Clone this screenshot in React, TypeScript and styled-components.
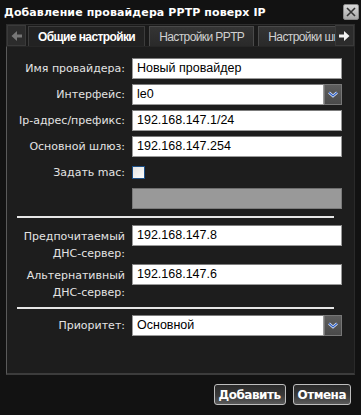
import React from "react";
import styled, {createGlobalStyle, css} from "styled-components";

const GlobalStyle = createGlobalStyle`
  html, body {
    margin: 0;
    padding: 0;
    background: #111;
  }
  * { box-sizing: border-box; }
`;

const Window = styled.div`
  width: 361px;
  height: 415px;
  background: #121212;
  font-family: "DejaVu Sans", Verdana, sans-serif;
  color: #e8e8e8;
  display: flex;
  flex-direction: column;
  overflow: hidden;
`;

const TitleBar = styled.div`
  height: 24px;
  display: flex;
  align-items: center;
  justify-content: space-between;
  padding: 0 2px 0 4px;
`;

const Title = styled.div`
  font-weight: bold;
  font-size: 11px;
  color: #fff;
  letter-spacing: 0.1px;
`;

const CloseButton = styled.div`
  width: 16px;
  height: 16px;
  border: 1px solid #888;
  border-radius: 2px;
  background: linear-gradient(#d8d8d8, #a8a8a8);
  display: flex;
  align-items: center;
  justify-content: center;
`;

const Frame = styled.div`
  margin: 0 6px;
  display: flex;
  flex-direction: column;
`;

const TabBar = styled.div`
  height: 22px;
  display: flex;
  align-items: stretch;
  background: #1a1a1a;
  border: 1px solid #2e2e2e;
  border-bottom: none;
`;

const ArrowButton = styled.div`
  width: 19px;
  flex: none;
  display: flex;
  align-items: center;
  justify-content: center;
  background: #2c2c2c;
  border: 1px solid #3a3a3a;
`;

const TabStrip = styled.div`
  flex: 1;
  display: flex;
  gap: 4px;
  overflow: hidden;
  padding-left: 2px;
  padding-top: 1px;
`;

const Tab = styled.div<{active?: boolean}>`
  flex: none;
  display: flex;
  align-items: center;
  padding: 0 9px;
  font-family: "Liberation Sans", Arial, sans-serif;
  font-size: 12px;
  letter-spacing: -0.6px;
  color: #d0d0d0;
  background: linear-gradient(#343434, #2a2a2a);
  border: 1px solid #4a4a4a;
  border-bottom: none;
  white-space: nowrap;

  ${({active}) => active && css`
    font-weight: bold;
    color: #fff;
    background: #222;
    border-color: #3c3c3c;
  `};
`;

const Content = styled.div`
  height: 329px;
  background: #1d1d1d;
  border-left: 1px solid #5a5a5a;
  border-right: 1px solid #2a2a2a;
  border-bottom: 2px solid #3c3c3c;
  border-top: 1px solid #262626;
  padding: 11px 12px 0 0;
  display: flex;
  flex-direction: column;
`;

const Row = styled.div<{tall?: boolean}>`
  display: grid;
  grid-template-columns: 118px 1fr;
  column-gap: 7px;
  align-items: ${({tall}) => tall ? "start" : "center"};
  min-height: 21px;
  margin-bottom: ${({tall}) => tall ? "2px" : "5px"};
`;

const Label = styled.div<{tall?: boolean}>`
  text-align: right;
  font-size: 11px;
  color: #e4e4e4;
  white-space: nowrap;
  line-height: ${({tall}) => tall ? "17px" : "21px"};
  ${({tall}) => tall && css`padding-top: 3px;`};
`;

const Input = styled.div<{disabled?: boolean}>`
  height: 21px;
  background: ${({disabled}) => disabled ? "#999" : "#fff"};
  border: 1px solid ${({disabled}) => disabled ? "#7a7a7a" : "#9a9a9a"};
  border-top-color: ${({disabled}) => disabled ? "#6e6e6e" : "#7c7c7c"};
  color: #000;
  font-family: "Liberation Sans", Arial, sans-serif;
  font-size: 12.5px;
  line-height: 19px;
  padding-left: 4px;
  white-space: nowrap;
  overflow: hidden;
`;

const Select = styled.div`
  display: flex;
  height: 21px;
`;

const SelectValue = styled(Input)`
  flex: 1;
`;

const SelectButton = styled.div`
  width: 18px;
  flex: none;
  background: linear-gradient(#5e5e5e, #4a4a4a);
  border: 1px solid #777;
  display: flex;
  align-items: center;
  justify-content: center;
`;

const Checkbox = styled.div`
  width: 13px;
  height: 13px;
  border: 1px solid #1d4f86;
  background: linear-gradient(135deg, #e4e4e4, #fafafa);
`;

const Separator = styled.div<{top: number; bottom: number}>`
  height: 2px;
  background: #e6e6e6;
  margin: ${({top, bottom}) => `${top}px 8px ${bottom}px 10px`};
`;

const Footer = styled.div`
  flex: 1;
  display: flex;
  justify-content: flex-end;
  align-items: flex-start;
  gap: 7px;
  padding: 9px 4px 0 0;
`;

const Button = styled.div`
  height: 21px;
  padding: 0 4px;
  display: flex;
  align-items: center;
  border: 1px solid #bdbdbd;
  border-radius: 3px;
  background: linear-gradient(#2a2a2a 0%, #3a3a3a 55%, #5a5a5a 100%);
  font-weight: bold;
  font-size: 12px;
  letter-spacing: -0.5px;
  color: #fff;
`;

const Chevron = () => (
    <svg width="10" height="7" viewBox="0 0 10 7">
        <path d="M1 1.5 L5 5 L9 1.5" fill="none" stroke="#e8f0ff" strokeWidth="2.6"/>
        <path d="M1 1.5 L5 5 L9 1.5" fill="none" stroke="#2f5fc4" strokeWidth="1.3"/>
    </svg>
);

const Arrow = ({dir}: {dir: "left" | "right"}) => (
    <svg width="11" height="10" viewBox="0 0 11 10" style={{transform: dir === "left" ? "scaleX(-1)" : undefined}}>
        <path d="M0 3.5 H5 V0 L10.5 5 L5 10 V6.5 H0 Z" fill={dir === "left" ? "#777" : "#f2f2f2"}/>
    </svg>
);

const Field = ({label, children}: {label: string; children: React.ReactNode}) => (
    <Row>
        <Label>{label}</Label>
        {children}
    </Row>
);

const DropDown = ({value}: {value: string}) => (
    <Select>
        <SelectValue>{value}</SelectValue>
        <SelectButton><Chevron/></SelectButton>
    </Select>
);

const App = () => {
    return (
        <Window>
            <GlobalStyle/>
            <TitleBar>
                <Title>Добавление провайдера PPTP поверх IP</Title>
                <CloseButton>
                    <svg width="10" height="10" viewBox="0 0 10 10">
                        <path d="M1 1 L9 9 M9 1 L1 9" stroke="#333" strokeWidth="1.6"/>
                    </svg>
                </CloseButton>
            </TitleBar>
            <Frame>
                <TabBar>
                    <ArrowButton><Arrow dir="left"/></ArrowButton>
                    <TabStrip>
                        <Tab active>Общие настройки</Tab>
                        <Tab>Настройки PPTP</Tab>
                        <Tab>Настройки шифрования</Tab>
                    </TabStrip>
                    <ArrowButton><Arrow dir="right"/></ArrowButton>
                </TabBar>
                <Content>
                    <Field label="Имя провайдера:"><Input>Новый провайдер</Input></Field>
                    <Field label="Интерфейс:"><DropDown value="le0"/></Field>
                    <Field label="Ip-адрес/префикс:"><Input>192.168.147.1/24</Input></Field>
                    <Field label="Основной шлюз:"><Input>192.168.147.254</Input></Field>
                    <Field label="Задать mac:"><Checkbox/></Field>
                    <Row>
                        <span/>
                        <Input disabled/>
                    </Row>
                    <Separator top={2} bottom={7}/>
                    <Row tall>
                        <Label tall>Предпочитаемый<br/>ДНС-сервер:</Label>
                        <Input>192.168.147.8</Input>
                    </Row>
                    <Row tall>
                        <Label tall>Альтернативный<br/>ДНС-сервер:</Label>
                        <Input>192.168.147.6</Input>
                    </Row>
                    <Separator top={4} bottom={6}/>
                    <Field label="Приоритет:"><DropDown value="Основной"/></Field>
                </Content>
                <Footer>
                    <Button>Добавить</Button>
                    <Button>Отмена</Button>
                </Footer>
            </Frame>
        </Window>
    );
};

export default App;
